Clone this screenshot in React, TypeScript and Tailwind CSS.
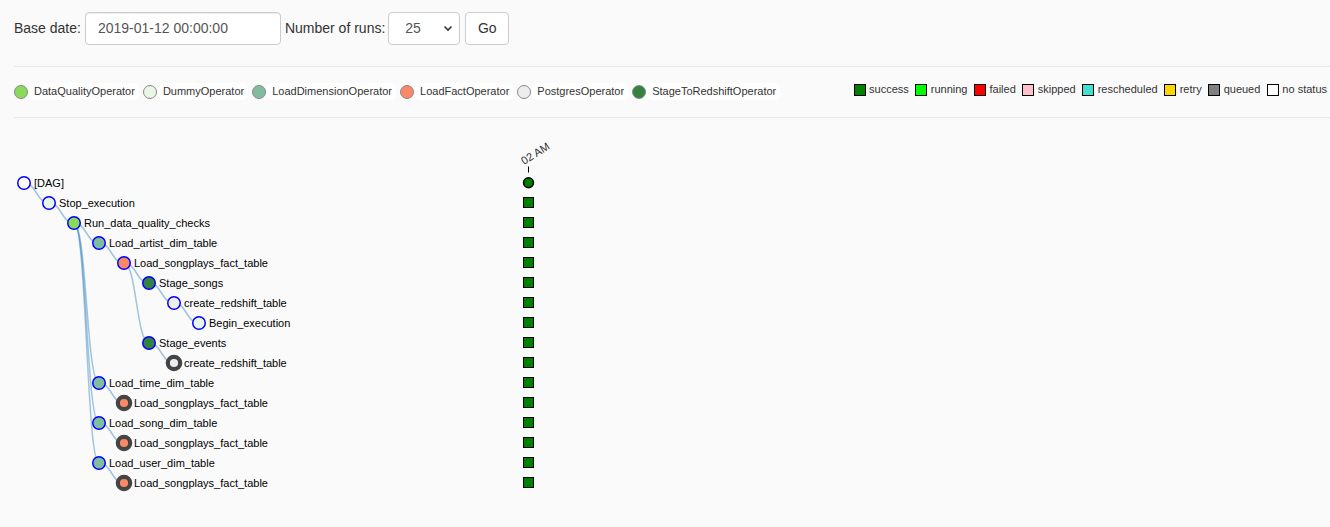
import React from "react";

type Node = { x: number; y: number; label: string; fill: string; gray?: boolean };

const C = {
  dq: "#89DA59",
  dummy: "#e8f7e4",
  dim: "#80BD9E",
  fact: "#F98866",
  pg: "#ededed",
  stage: "#358140",
};

const nodes: Node[] = [
  { x: 24, y: 183, label: "[DAG]", fill: "#ffffff" },
  { x: 49, y: 203, label: "Stop_execution", fill: C.dummy },
  { x: 74, y: 223, label: "Run_data_quality_checks", fill: C.dq },
  { x: 99, y: 243, label: "Load_artist_dim_table", fill: C.dim },
  { x: 124, y: 263, label: "Load_songplays_fact_table", fill: C.fact },
  { x: 149, y: 283, label: "Stage_songs", fill: C.stage },
  { x: 174, y: 303, label: "create_redshift_table", fill: C.pg },
  { x: 199, y: 323, label: "Begin_execution", fill: C.dummy },
  { x: 149, y: 343, label: "Stage_events", fill: C.stage },
  { x: 174, y: 363, label: "create_redshift_table", fill: C.pg, gray: true },
  { x: 99, y: 383, label: "Load_time_dim_table", fill: C.dim },
  { x: 124, y: 403, label: "Load_songplays_fact_table", fill: C.fact, gray: true },
  { x: 99, y: 423, label: "Load_song_dim_table", fill: C.dim },
  { x: 124, y: 443, label: "Load_songplays_fact_table", fill: C.fact, gray: true },
  { x: 99, y: 463, label: "Load_user_dim_table", fill: C.dim },
  { x: 124, y: 483, label: "Load_songplays_fact_table", fill: C.fact, gray: true },
];

const links: [number, number][] = [
  [0, 1],
  [1, 2],
  [2, 3],
  [2, 10],
  [2, 12],
  [2, 14],
  [3, 4],
  [4, 5],
  [4, 8],
  [5, 6],
  [6, 7],
  [8, 9],
  [10, 11],
  [12, 13],
  [14, 15],
];

const opLegend = [
  { name: "DataQualityOperator", fill: C.dq },
  { name: "DummyOperator", fill: C.dummy },
  { name: "LoadDimensionOperator", fill: C.dim },
  { name: "LoadFactOperator", fill: C.fact },
  { name: "PostgresOperator", fill: C.pg },
  { name: "StageToRedshiftOperator", fill: C.stage },
];

const stateLegend = [
  { name: "success", cls: "bg-[#008000]" },
  { name: "running", cls: "bg-[#00ff00]" },
  { name: "failed", cls: "bg-[#ff0000]" },
  { name: "skipped", cls: "bg-[#ffc0cb]" },
  { name: "rescheduled", cls: "bg-[#40e0d0]" },
  { name: "retry", cls: "bg-[#ffd700]" },
  { name: "queued", cls: "bg-[#808080]" },
  { name: "no status", cls: "bg-white" },
];

function diag(a: Node, b: Node) {
  const m = (a.x + b.x) / 2;
  return `M${a.x},${a.y} C${m},${a.y} ${m},${b.y} ${b.x},${b.y}`;
}

export default function App() {
  return (
    <div
      className="w-full h-[527px] bg-[#fafafa] text-[#333] overflow-hidden"
      style={{ fontFamily: '"Liberation Sans", Arial, sans-serif' }}
    >
      {/* form */}
      <div className="h-[66px] pt-[12px] pl-[14px] flex items-start">
        <div className="flex items-center h-[33px]">
          <span className="text-[14px] mr-[4px]">Base date:</span>
          <div className="w-[196px] h-[33px] bg-white border border-[#ccc] rounded-[4px] shadow-[inset_0_1px_1px_rgba(0,0,0,0.075)] flex items-center pl-[12px] text-[14px] text-[#555]">
            2019-01-12 00:00:00
          </div>
          <span className="text-[14px] ml-[4px] mr-[3px]">Number of runs:</span>
          <div className="w-[72px] h-[33px] bg-white border border-[#ccc] rounded-[4px] flex items-center pl-[16px] pr-[6px] text-[14px] text-[#555]">
            <span className="flex-1">25</span>
            <svg width="10" height="7" viewBox="0 0 10 7">
              <polyline points="1.5,1.5 5,5 8.5,1.5" fill="none" stroke="#333" strokeWidth="1.6" />
            </svg>
          </div>
          <div className="ml-[5px] w-[44px] h-[33px] bg-white border border-[#ccc] rounded-[4px] flex items-center justify-center text-[14px] text-[#333]">
            Go
          </div>
        </div>
      </div>
      <div className="ml-[14px] h-px bg-[#e8e8e8]" />

      {/* legends */}
      <div className="h-[50px] pl-[14px] flex items-center">
        <div className="flex items-center mb-[1px]">
          {opLegend.map((o) => (
            <div key={o.name} className="flex items-center mr-[4px]">
              <span
                className="w-[14px] h-[14px] rounded-full border border-[#888] box-border"
                style={{ backgroundColor: o.fill }}
              />
              <span className="ml-[1px] h-[17px] bg-white rounded-[5px] pl-[5px] pr-[4px] flex items-center text-[11px] text-[#333]">
                {o.name}
              </span>
            </div>
          ))}
        </div>
        <div className="ml-auto mr-[3px] flex items-center mb-[5px]">
          {stateLegend.map((s, i) => (
            <div key={s.name} className={`flex items-center ${i === 0 ? "" : "ml-[6.5px]"}`}>
              <span className={`w-[12px] h-[12px] border border-black box-border ${s.cls}`} />
              <span className="ml-[3.5px] text-[11px] text-[#333]">{s.name}</span>
            </div>
          ))}
        </div>
      </div>
      <div className="ml-[14px] h-px bg-[#e8e8e8]" />

      {/* tree */}
      <svg width="1330" height="409" viewBox="0 118 1330 409" className="block">
        <g fill="none" stroke="#3182bd" strokeOpacity="0.45" strokeWidth="1.5">
          {links.map(([a, b], i) => (
            <path key={i} d={diag(nodes[a], nodes[b])} />
          ))}
        </g>
        {nodes.map((n, i) => (
          <g key={i}>
            {n.gray ? (
              <circle cx={n.x} cy={n.y} r={6.2} fill={n.fill} stroke="#444" strokeWidth={4.2} />
            ) : (
              <circle cx={n.x} cy={n.y} r={6.25} fill={n.fill} stroke="#0000ff" strokeWidth={1.5} />
            )}
            <text
              x={n.x + 10}
              y={n.y + 4}
              fontSize="11"
              fill="#000"
              style={{ fontFamily: '"Liberation Sans", Arial, sans-serif' }}
            >
              {n.label}
            </text>
          </g>
        ))}

        {/* run column */}
        <text
          x={524}
          y={165}
          fontSize="11"
          fill="#333"
          transform="rotate(-32 524 165)"
          style={{ fontFamily: '"Liberation Sans", Arial, sans-serif' }}
        >
          02 AM
        </text>
        <line x1={528.5} y1={166.5} x2={528.5} y2={172.5} stroke="#000" strokeWidth={1} />
        <circle cx={528.5} cy={182.7} r={4.9} fill="#008000" stroke="#000" strokeWidth={1.6} />
        {nodes.slice(1).map((n, i) => (
          <rect
            key={i}
            x={523.5}
            y={n.y - 5.5}
            width={10}
            height={10}
            fill="#008000"
            stroke="#000"
            strokeWidth={1}
          />
        ))}
      </svg>
    </div>
  );
}
